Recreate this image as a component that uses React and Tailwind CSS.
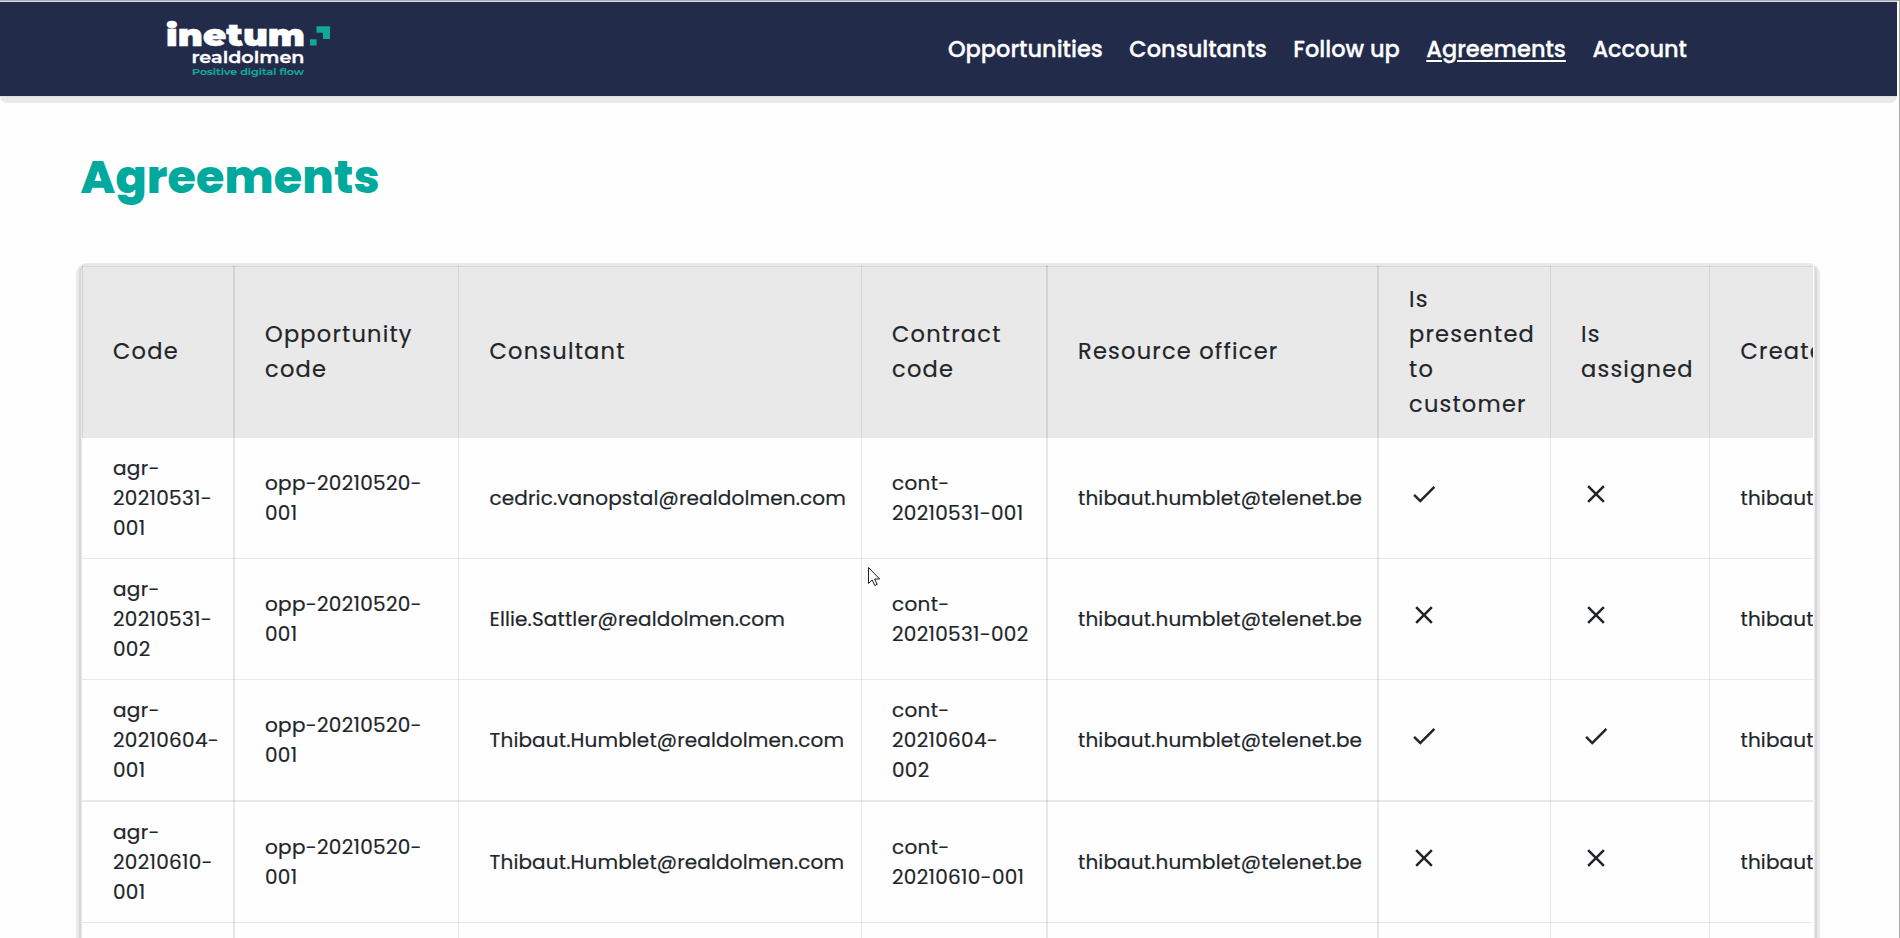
const NAV = [
  { label: "Opportunities" },
  { label: "Consultants" },
  { label: "Follow up" },
  { label: "Agreements", active: true },
  { label: "Account" },
];

const COLUMNS = [
  "Code",
  "Opportunity code",
  "Consultant",
  "Contract code",
  "Resource officer",
  "Is presented to customer",
  "Is assigned",
  "Created by",
];

const OFFICER = "thibaut.humblet@telenet.be";

const ROWS = [
  { code: "agr-20210531-001", opportunity: "opp-20210520-001", consultant: "cedric.vanopstal@realdolmen.com", contract: "cont-20210531-001", presented: true, assigned: false, height: "h-[121px]", line: "shadow-[inset_0_-1px_0_#e9e9e9]" },
  { code: "agr-20210531-002", opportunity: "opp-20210520-001", consultant: "Ellie.Sattler@realdolmen.com", contract: "cont-20210531-002", presented: false, assigned: false, height: "h-[121px]", line: "shadow-[inset_0_-1px_0_#e9e9e9]" },
  { code: "agr-20210604-001", opportunity: "opp-20210520-001", consultant: "Thibaut.Humblet@realdolmen.com", contract: "cont-20210604-002", presented: true, assigned: true, height: "h-[122px]", line: "shadow-[inset_0_-2px_0_#e9e9e9]" },
  { code: "agr-20210610-001", opportunity: "opp-20210520-001", consultant: "Thibaut.Humblet@realdolmen.com", contract: "cont-20210610-001", presented: false, assigned: false, height: "h-[121px]", line: "shadow-[inset_0_-1px_0_#e9e9e9]" },
];

const GRID = "grid w-[1844px] grid-cols-[151px_225px_403px_185px_331px_173px_159px_217px]";

// Left divider of each column; some dividers are two pixels wide.
const CELL = [
  "border-l border-transparent pl-[30px]",
  "border-l-2 border-black/9 pl-[30px]",
  "border-l border-black/9 pl-[30.5px]",
  "border-l border-black/9 pl-[30px]",
  "border-l-2 border-black/9 pl-[30px]",
  "border-l-2 border-black/9 pl-[30px]",
  "border-l border-black/9 pl-[30px]",
  "border-l border-black/9 pl-[30.5px]",
];

function Logo() {
  return (
    <svg width="172" height="64" viewBox="0 0 172 64" className="mt-[13px] block self-start font-[Montserrat,Inter,sans-serif]">
      <text x="6" y="31" fontSize="30" fontWeight="900" fill="#fff" stroke="#fff" strokeWidth="0.4" textLength="139" lengthAdjust="spacingAndGlyphs">inetum</text>
      <text x="31.5" y="47.5" fontSize="15.5" fontWeight="600" fill="#fff" stroke="#fff" strokeWidth="0.3" textLength="113" lengthAdjust="spacingAndGlyphs">realdolmen</text>
      <text x="32" y="60" fontSize="8.5" fontWeight="600" fill="#12a899" stroke="#12a899" strokeWidth="0.2" textLength="112" lengthAdjust="spacingAndGlyphs">Positive digital flow</text>
      <path d="M156.5 11.3H170V24h-7v-6.3h-6.5zM150 24.2h6.6v6.3H150z" fill="#12a899" />
    </svg>
  );
}

function Mark({ on }) {
  return (
    <svg viewBox="0 0 24 24" className="mb-2 size-[30px] fill-[#212529]">
      <path
        d={
          on
            ? "M9 16.2 4.8 12l-1.4 1.4L9 19 21 7l-1.4-1.4z"
            : "M19 6.41 17.59 5 12 10.59 6.41 5 5 6.41 10.59 12 5 17.59 6.41 19 12 13.41 17.59 19 19 17.59 13.41 12z"
        }
      />
    </svg>
  );
}

function Cell({ index, className = "", children }) {
  return <div className={`flex items-center ${CELL[index]} ${className}`}>{children}</div>;
}

export default function App() {
  return (
    <div className="relative h-[938px] w-full overflow-hidden border-t border-r border-[#a8a8ad] bg-[#fefefe] font-[Poppins,Inter,sans-serif] text-[#212529]">
      <div className="mr-[2px]">
        <header className="flex h-[95px] items-center justify-between border-t border-[#dcdce6] bg-[#232b4b] pr-[210px] pl-[160px]">
          <Logo />
          <nav className="flex gap-[26.5px] text-[22.5px] leading-[34px] font-medium text-white [-webkit-text-stroke:0.3px]">
            {NAV.map((item) => (
              <a key={item.label} className={item.active ? "underline decoration-2 underline-offset-[3px]" : ""}>
                {item.label}
              </a>
            ))}
          </nav>
        </header>
        <div className="h-[7px] rounded-b-[7px] border-t border-[#dedede] bg-[#e9e9e9]" />
      </div>

      <h1 className="mt-[39px] pl-[80.5px] text-[46px] leading-[70px] font-extrabold tracking-[0.15px] text-[#00a99d]">Agreements</h1>

      <div className="mt-[51px] ml-[76px] w-[1744px] rounded-t-xl bg-[#e9e9e9] px-[3px] pt-[2px] [-webkit-text-stroke:0.2px]">
        <div className="rounded-t-lg border-x-2 border-[#d7d7d7] px-px">
          <div className="overflow-hidden border-r border-[#fefefe] bg-[#fefefe]">
            <div className={`${GRID} h-[173px] bg-[#e9e9e9] text-[22.5px] leading-[35px] tracking-[1.22px] shadow-[inset_0_1px_0_#e9e9e9,inset_0_2px_0_#d6d6d6]`}>
              {COLUMNS.map((name, i) => (
                <Cell key={name} index={i} className={i === 0 ? "border-l-black/9" : ""}>
                  <span className="mr-2.5">{name}</span>
                </Cell>
              ))}
            </div>
            {ROWS.map((row) => (
              <div key={row.code} className={`${GRID} ${row.height} ${row.line} text-[20px] leading-[30px] tracking-[0.3px]`}>
                <Cell index={0} className="pb-0.5"><span className="mr-2">{row.code}</span></Cell>
                <Cell index={1} className="pb-0.5"><span className="mr-4">{row.opportunity}</span></Cell>
                <Cell index={2} className="pb-0.5 tracking-[0.14px]">{row.consultant}</Cell>
                <Cell index={3} className="pb-0.5"><span className="mr-4">{row.contract}</span></Cell>
                <Cell index={4} className="pb-0.5 tracking-[0.14px]">{OFFICER}</Cell>
                <Cell index={5} className="pb-0.5"><Mark on={row.presented} /></Cell>
                <Cell index={6} className="pb-0.5"><Mark on={row.assigned} /></Cell>
                <Cell index={7} className="pb-0.5 tracking-[0.14px]">{OFFICER}</Cell>
              </div>
            ))}
            <div className={`${GRID} h-[121px]`}>
              {COLUMNS.map((name, i) => (
                <Cell key={name} index={i} />
              ))}
            </div>
          </div>
        </div>
      </div>

      <svg width="13" height="20" viewBox="0 0 13 20" className="absolute top-[566px] left-[868px]">
        <path d="M.5.5v16l3.7-3.6 2.6 5.6 2.4-1.1-2.6-5.4h5z" fill="#fff" stroke="#1b1b2b" strokeWidth="1" />
      </svg>
    </div>
  );
}
